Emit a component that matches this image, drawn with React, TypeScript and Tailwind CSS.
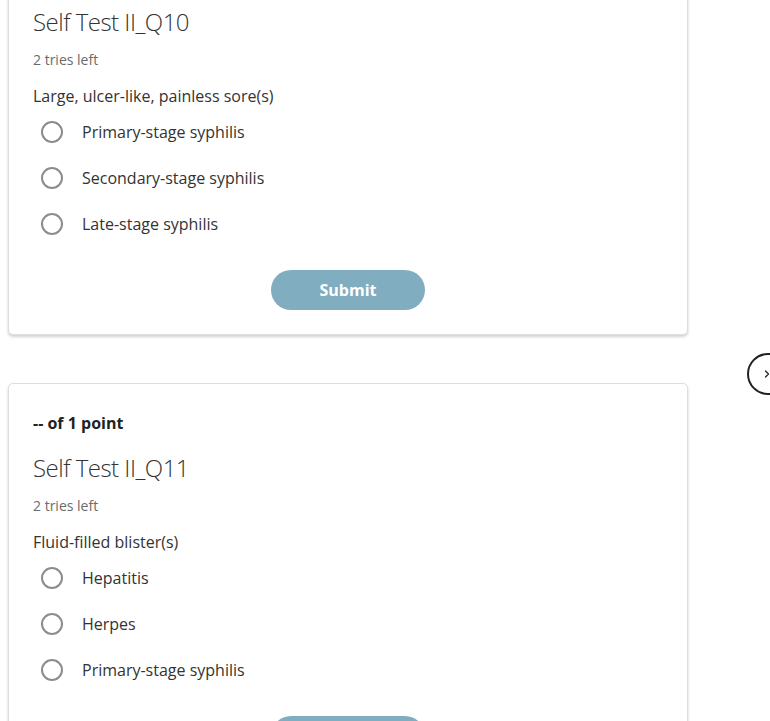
import { ChevronRight } from "lucide-react";

type Question = {
  id: string;
  title: string;
  prompt: string;
  options: string[];
};

const QUESTIONS: Question[] = [
  {
    id: "q10",
    title: "Self Test II_Q10",
    prompt: "Large, ulcer-like, painless sore(s)",
    options: ["Primary-stage syphilis", "Secondary-stage syphilis", "Late-stage syphilis"],
  },
  {
    id: "q11",
    title: "Self Test II_Q11",
    prompt: "Fluid-filled blister(s)",
    options: ["Hepatitis", "Herpes", "Primary-stage syphilis"],
  },
];

function QuestionCard({ q }: { q: Question }) {
  return (
    <div className="w-[680px] rounded-[5px] border border-[#dedede] bg-white px-6 pt-[27px] pb-6 shadow-[0_2px_3px_rgba(0,0,0,0.18)]">
      <div className="text-base leading-6 font-bold text-[#222]">-- of 1 point</div>
      <h2 className="mt-[17px] text-[24px] leading-8 font-light tracking-[-0.5px] text-[#333]">{q.title}</h2>
      <div className="mt-[12px] text-sm leading-5 text-[#6b6b6b]">2 tries left</div>
      <div className="mt-[14px] text-base leading-[25px] text-[#333]">{q.prompt}</div>
      <div className="flex flex-col">
        {q.options.map((opt) => (
          <label key={opt} className="flex h-[46px] items-center pl-2">
            <span className="h-[22px] w-[22px] rounded-full border-2 border-[#8c8c8c] bg-white" />
            <span className="ml-[19px] text-base text-[#333]">{opt}</span>
          </label>
        ))}
      </div>
      <div className="mt-[23px] flex justify-center">
        <button className="h-10 w-[154px] rounded-full bg-[#80aec0] text-base font-bold text-white">
          Submit
        </button>
      </div>
    </div>
  );
}

export default function App() {
  return (
    <div className="relative h-[721px] w-[770px] overflow-hidden bg-white font-['Open_Sans',sans-serif]">
      <div className="-mt-[63px] flex flex-col gap-[48px] pl-2">
        {QUESTIONS.map((q) => (
          <QuestionCard key={q.id} q={q} />
        ))}
      </div>
      {/* Next arrow */}
      <button className="absolute left-[747px] top-[353px] flex h-[42px] w-[42px] items-center justify-center rounded-full border-2 border-[#222] bg-white">
        <ChevronRight className="-ml-[2px] h-3 w-3 text-[#222]" strokeWidth={2.5} />
      </button>
    </div>
  );
}
